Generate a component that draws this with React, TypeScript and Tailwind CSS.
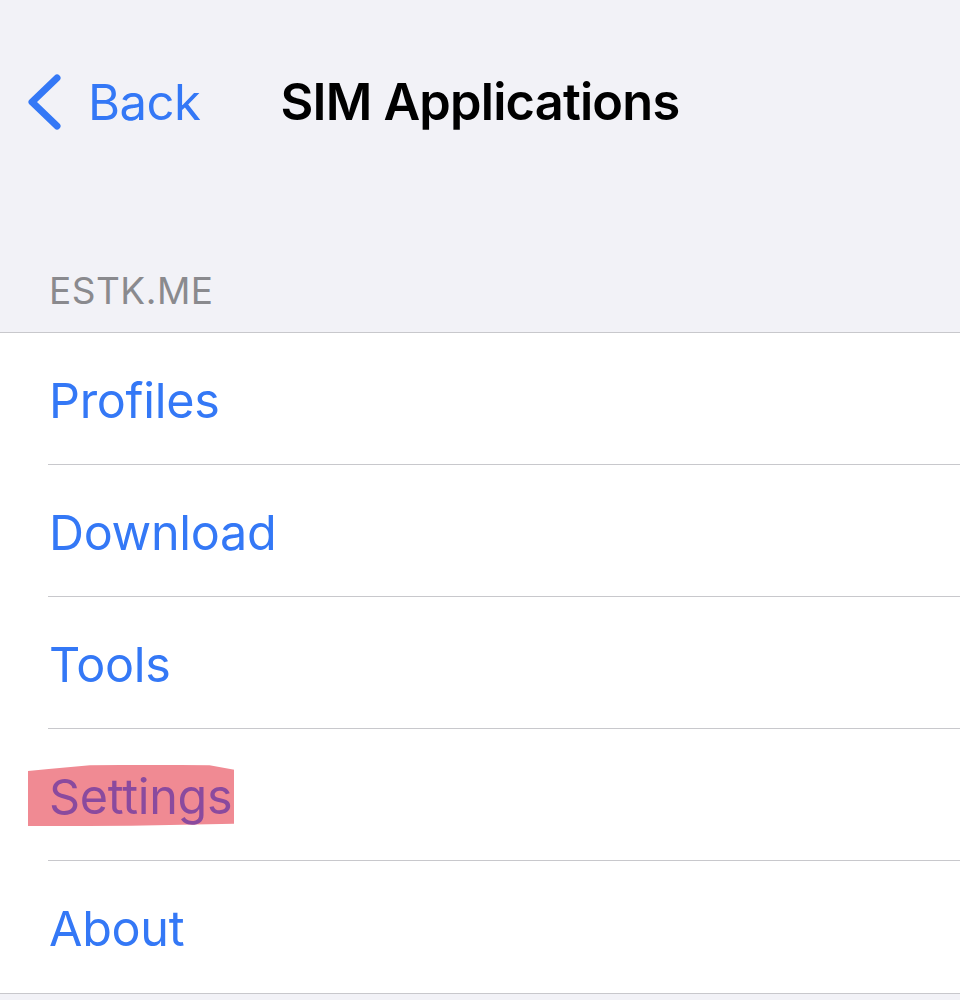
import React from "react";

const items = ["Profiles", "Download", "Tools", "Settings", "About"];

function Row({ label, last }: { label: string; last?: boolean }) {
  return (
    <div className="pl-[48px]">
      <div className={`h-[132px] flex items-center pt-[5px] ${last ? "" : "border-b border-[#c8c8cc]"}`}>
        {label === "Settings" ? (
          <span className="relative pl-[1px]">
            <span className="absolute left-[-20px] right-[-2px] top-[-8px] bottom-[-5px] bg-[#f08a93] [clip-path:polygon(0_10%,10%_7%,30%_1%,60%_0,88%_1%,100%_8%,100%_96%,50%_99%,8%_100%,0_100%)]" />
            <span className="relative text-[#8a4a9e]">{label}</span>
          </span>
        ) : (
          <span className="text-[#3478f6] pl-[1px]">{label}</span>
        )}
      </div>
    </div>
  );
}

export default function App() {
  return (
    <div className="w-[960px] h-[1000px] bg-[#f2f2f7] overflow-hidden" style={{ fontFamily: "Inter, 'Noto Sans', sans-serif" }}>
      <div className="h-[204px] flex items-center relative">
        <div className="flex items-center pl-[26px]">
          <svg width="36" height="56" viewBox="0 0 36 56" className="mr-[26px]">
            <path d="M31 4 L6 28 L31 52" fill="none" stroke="#3478f6" strokeWidth="7" strokeLinecap="round" strokeLinejoin="round" />
          </svg>
          <span className="text-[#3478f6] text-[49px] leading-none tracking-[-0.5px]">Back</span>
        </div>
        <span className="ml-[80px] text-black text-[50.5px] font-semibold leading-none tracking-[-0.8px]">SIM Applications</span>
      </div>
      <div className="h-[128px] pl-[49px] pt-[68px] text-[#8a8a8e] text-[37px] leading-none tracking-[0.5px]">ESTK.ME</div>
      <div className="bg-white border-t border-b border-[#c8c8cc] text-[48.5px] leading-none tracking-[-0.3px]">
        {items.map((it, i) => (
          <Row key={it} label={it} last={i === items.length - 1} />
        ))}
      </div>
    </div>
  );
}
